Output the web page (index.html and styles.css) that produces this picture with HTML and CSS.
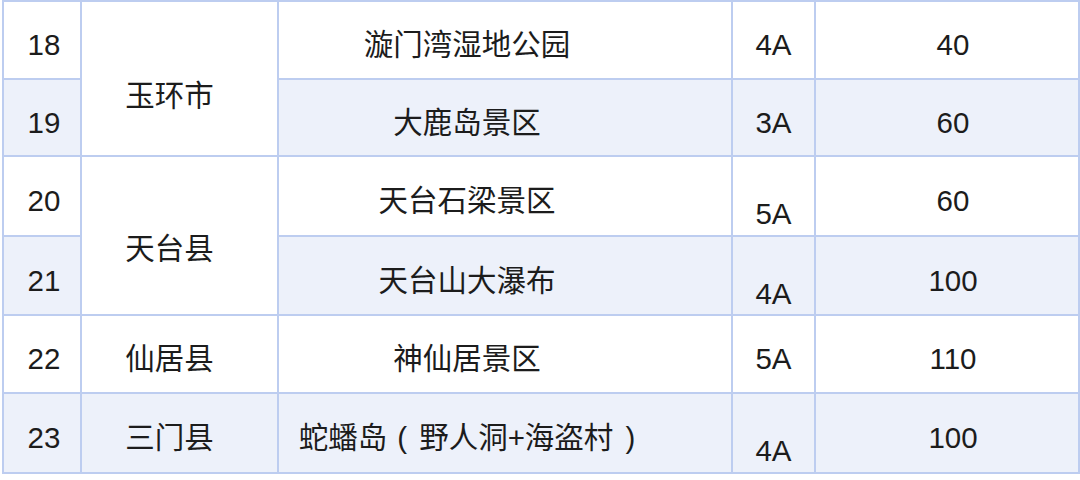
FILE: index.html
```html
<!DOCTYPE html>
<html lang="zh">
<head>
<meta charset="utf-8">
<link rel="stylesheet" href="styles.css">
</head>
<body>
<table class="spots">
  <colgroup>
    <col class="c-no"><col class="c-county"><col class="c-name"><col class="c-grade"><col class="c-price">
  </colgroup>
  <tbody>
    <tr class="r18">
      <td class="no">18</td>
      <td class="county merged-a" rowspan="2">玉环市</td>
      <td class="name">漩门湾湿地公园</td>
      <td class="grade">4A</td>
      <td class="price">40</td>
    </tr>
    <tr class="r19 shade">
      <td class="no">19</td>
      <td class="name">大鹿岛景区</td>
      <td class="grade">3A</td>
      <td class="price">60</td>
    </tr>
    <tr class="r20">
      <td class="no">20</td>
      <td class="county merged-b" rowspan="2">天台县</td>
      <td class="name">天台石梁景区</td>
      <td class="grade low">5A</td>
      <td class="price">60</td>
    </tr>
    <tr class="r21 shade">
      <td class="no">21</td>
      <td class="name">天台山大瀑布</td>
      <td class="grade low">4A</td>
      <td class="price">100</td>
    </tr>
    <tr class="r22">
      <td class="no">22</td>
      <td class="county">仙居县</td>
      <td class="name">神仙居景区</td>
      <td class="grade">5A</td>
      <td class="price">110</td>
    </tr>
    <tr class="r23 shade">
      <td class="no">23</td>
      <td class="county">三门县</td>
      <td class="name">蛇蟠岛<span class="po">(</span>野人洞+海盗村<span class="pc">)</span></td>
      <td class="grade low">4A</td>
      <td class="price">100</td>
    </tr>
  </tbody>
</table>
</body>
</html>
```

FILE: styles.css
```css
html, body {
  margin: 0;
  padding: 0;
  background: #ffffff;
}

body {
  font-family: "Liberation Sans", "Noto Sans CJK SC", sans-serif;
  font-size: 29.5px;
  color: #1c1c1c;
}

.spots {
  margin-left: 2px;
  width: 1076px;
  table-layout: fixed;
  border-collapse: collapse;
  border: 2px solid #6f90d3;
  border-top: 1px solid #c9d7f2;
}

.c-no { width: 78px; }
.c-county { width: 197px; }
.c-name { width: 454px; }
.c-grade { width: 83px; }
.c-price { width: 264px; }

.spots td {
  border: 2px solid #bdcdf0;
  padding: 10px 0 0 0;
  line-height: 36px;
  text-align: center;
  vertical-align: middle;
  white-space: nowrap;
  background: #ffffff;
}

.spots tr.shade td {
  background: #edf1fa;
}

.r18 { height: 78px; }
.r19 { height: 77px; }
.r20 { height: 80px; }
.r21 { height: 79px; }
.r22 { height: 78px; }
.r23 { height: 80px; }

.spots td.no {
  padding-left: 4px;
}

.spots td.county {
  padding-right: 20px;
}

.spots td.merged-a {
  padding-top: 34px;
}

.spots td.merged-b {
  padding-top: 27px;
}

.spots td.name {
  padding-right: 76px;
}

.po {
  margin: 0 12px 0 10px;
}

.pc {
  margin: 0 0 0 12px;
}

.spots td.grade.low {
  padding-top: 36px;
}

.spots td.price {
  padding-left: 12px;
}
```
